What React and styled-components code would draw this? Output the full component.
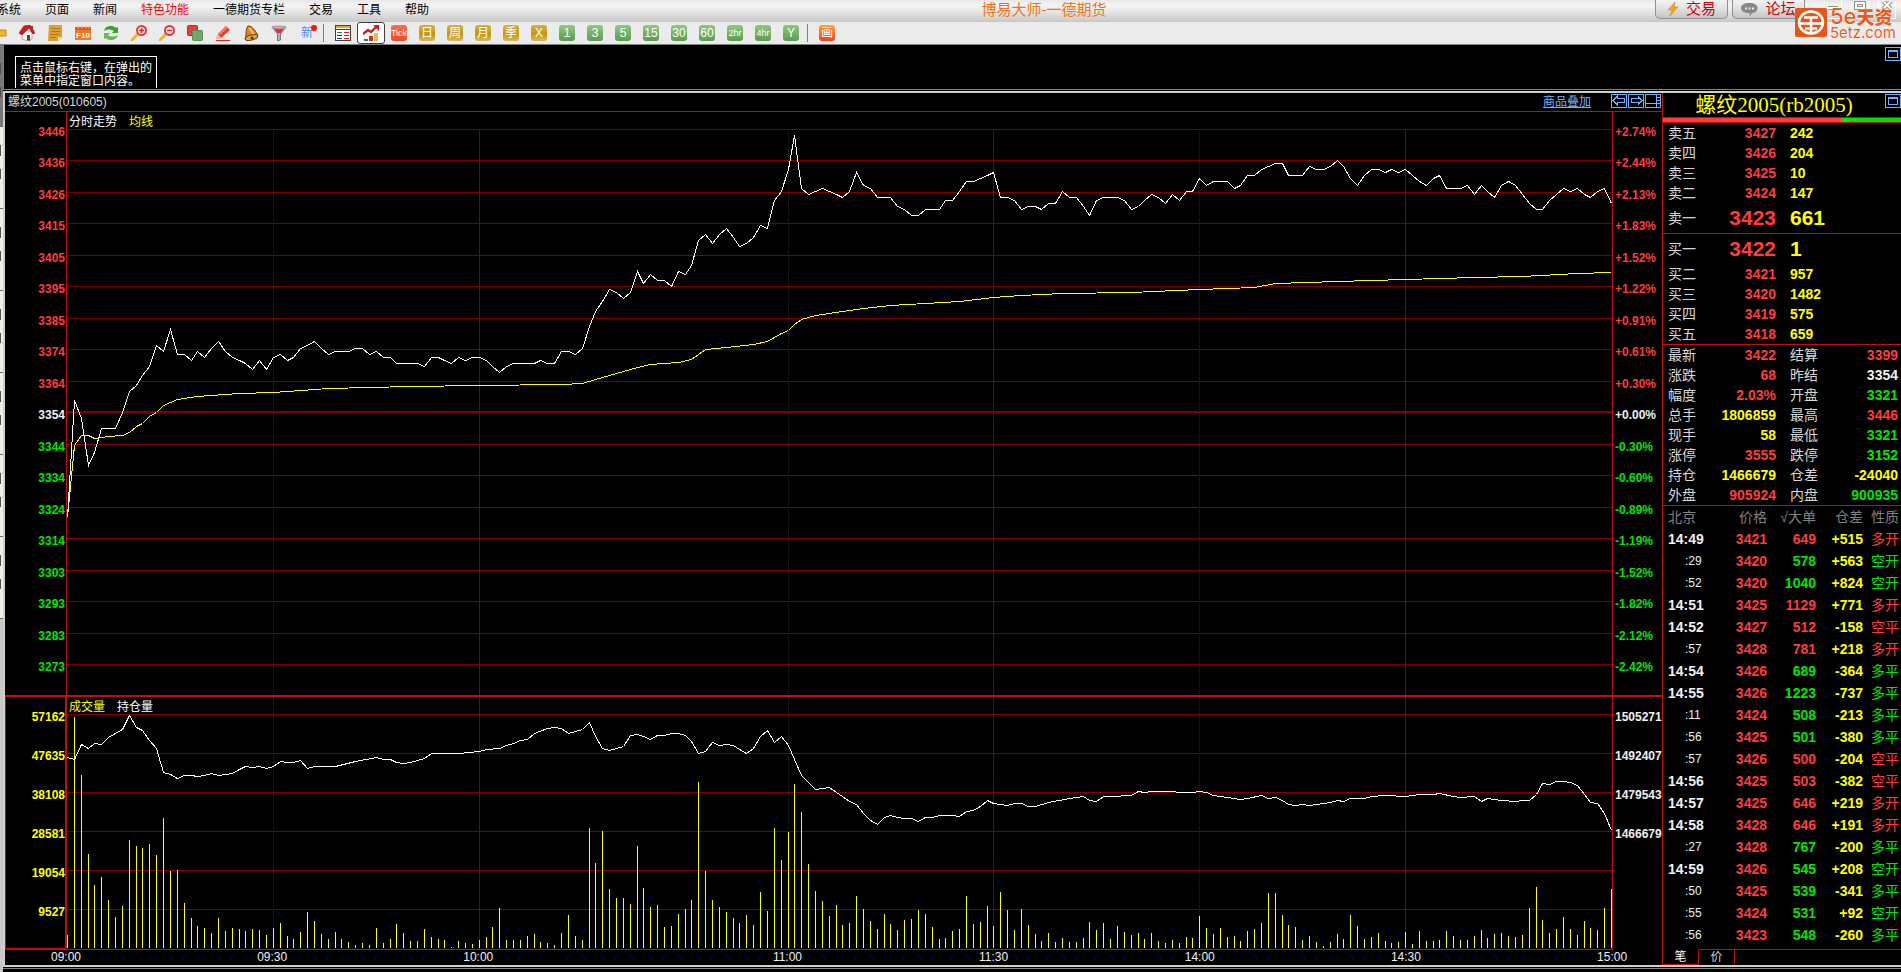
import React from "react"
import styled, { createGlobalStyle, css } from "styled-components"

const colors = {
  red: "#ff3c3c",
  green: "#00e600",
  yellow: "#ffff00",
  white: "#f0f0f0",
  label: "#d8d8d8",
  muted: "#808080",
  line: "#c0100c",
  grid: "#800000",
  link: "#6fb1ff",
  frame: "#d4d0c8",
}

const cjk = `"Liberation Sans", "Noto Sans CJK SC", sans-serif`

/* ---------- market data, one value per traded minute ---------- */

const MINUTES = 225
const MIN_W = 1544 / MINUTES

const prices = [
  3320, 3358, 3352, 3337, 3341, 3349, 3349, 3349, 3354, 3361, 3363, 3366, 3369, 3376, 3374,
  3381, 3373, 3373, 3371, 3374, 3372, 3375, 3377, 3374, 3372, 3371, 3370, 3368, 3371, 3368,
  3372, 3373, 3371, 3372, 3375, 3376, 3377, 3375, 3373, 3374, 3374, 3374, 3375, 3375, 3373,
  3374, 3372, 3372, 3370, 3370, 3370, 3370, 3369, 3372, 3372, 3371, 3370, 3372, 3371, 3372,
  3372, 3371, 3369, 3367, 3369, 3370, 3370, 3370, 3370, 3371, 3370, 3370, 3374, 3374, 3373,
  3375, 3382, 3387, 3390, 3394, 3393, 3391, 3393, 3400, 3396, 3399, 3397, 3397, 3395, 3400,
  3399, 3402, 3410, 3412, 3409, 3412, 3414, 3411, 3408, 3409, 3411, 3415, 3414, 3423, 3426,
  3433, 3444, 3427, 3425, 3426, 3427, 3426, 3425, 3424, 3426, 3432, 3428, 3427, 3424, 3424,
  3424, 3421, 3420, 3418, 3418, 3420, 3420, 3420, 3423, 3423, 3426, 3429, 3429, 3430, 3431,
  3432, 3424, 3424, 3423, 3420, 3421, 3421, 3420, 3422, 3422, 3426, 3424, 3424, 3421, 3418,
  3423, 3424, 3424, 3424, 3423, 3420, 3421, 3423, 3425, 3424, 3422, 3425, 3423, 3426, 3426,
  3430, 3428, 3429, 3429, 3429, 3427, 3428, 3431, 3431, 3433, 3434, 3435, 3435, 3431, 3431,
  3431, 3434, 3433, 3433, 3434, 3436, 3434, 3430, 3428, 3431, 3433, 3433, 3432, 3433, 3432,
  3433, 3431, 3429, 3428, 3430, 3431, 3427, 3427, 3427, 3428, 3425, 3428, 3426, 3424, 3428,
  3429, 3428, 3425, 3422, 3420, 3420, 3423, 3425, 3427, 3426, 3427, 3425, 3424, 3426, 3427,
  3422,
]

// [minute, average price]
const average = [
  [0, 3320], [1, 3343.5], [2, 3346.6], [3, 3346.6], [4, 3345.6], [5, 3345.9], [6, 3346.3],
  [8, 3346.6], [9, 3347.7], [10, 3349.4], [11, 3350.6], [12, 3352.7], [13, 3354.2],
  [14, 3356.4], [16, 3358.3], [19, 3359.3], [25, 3360.3], [30, 3360.7], [38, 3361.9],
  [50, 3362.6], [60, 3362.9], [72, 3363.3], [75, 3363.6], [77, 3364.9], [79, 3366.2],
  [82, 3367.9], [83, 3368.8], [85, 3369.6], [89, 3370.4], [91, 3371.4], [93, 3374.4],
  [96, 3375.2], [100, 3376.3], [102, 3377.2], [104, 3379.6], [105, 3380.7], [106, 3382.7],
  [107, 3384.3], [109, 3385.6], [113, 3386.8], [116, 3387.8], [120, 3388.7], [125, 3389.5],
  [130, 3390], [135, 3391.3], [139, 3392.1], [145, 3392.6], [155, 3393.2], [165, 3394.1],
  [173, 3394.8], [176, 3395.9], [185, 3396.5], [195, 3397.3], [205, 3398], [212, 3398.4],
  [220, 3399.2], [225, 3399.6],
]

// volume bars, in chart units of 244 lots
const volumes = [
  13, 231, 173, 94, 63, 71, 48, 31, 42, 108, 102, 100, 104, 93, 130,
  77, 78, 45, 30, 22, 20, 15, 30, 17, 20, 19, 17, 19, 18, 13,
  20, 25, 12, 9, 16, 36, 27, 14, 9, 16, 9, 6, 3, 5, 3,
  20, 5, 9, 24, 15, 7, 7, 19, 11, 9, 8, 1, 7, 5, 4,
  8, 11, 21, 40, 8, 8, 8, 12, 14, 6, 5, 3, 15, 33, 12,
  8, 120, 85, 117, 59, 50, 50, 44, 102, 60, 41, 43, 21, 22, 34,
  39, 48, 166, 77, 48, 41, 36, 30, 25, 33, 23, 56, 37, 120, 88,
  116, 164, 136, 84, 57, 47, 32, 43, 23, 25, 52, 39, 27, 19, 34,
  24, 18, 28, 29, 38, 34, 21, 9, 10, 17, 19, 52, 24, 26, 42,
  22, 56, 38, 18, 39, 23, 14, 7, 15, 6, 10, 6, 6, 10, 26,
  18, 25, 9, 22, 16, 13, 15, 9, 15, 7, 5, 8, 5, 11, 10,
  32, 20, 14, 20, 11, 12, 7, 17, 19, 25, 55, 55, 33, 23, 21,
  8, 12, 6, 2, 6, 14, 9, 33, 22, 9, 11, 15, 7, 5, 6,
  16, 4, 17, 7, 7, 8, 17, 12, 8, 8, 12, 18, 10, 14, 15,
  12, 11, 13, 40, 61, 28, 15, 19, 31, 19, 13, 27, 20, 18, 40,
  59,
]

// open interest, [minute, chart units above the base line]
const interest = [
  [0, 191], [1, 189], [2, 204], [3, 200], [4, 205], [5, 204], [6, 211], [7, 215], [8, 219],
  [9, 233], [10, 221], [11, 218], [12, 208], [13, 200], [14, 176], [15, 174], [16, 170],
  [17, 173], [18, 173], [19, 172], [20, 173], [21, 175], [22, 173], [23, 174], [24, 175],
  [25, 179], [26, 182], [27, 181], [28, 182], [29, 180], [30, 182], [31, 187], [32, 186],
  [33, 186], [34, 188], [35, 180], [36, 182], [39, 182], [42, 187], [45, 191], [46, 189],
  [47, 189], [48, 186], [49, 185], [50, 186], [52, 190], [53, 195], [57, 195], [60, 197],
  [61, 199], [63, 200], [64, 203], [65, 205], [66, 208], [67, 209], [68, 215], [70, 220],
  [71, 221], [72, 220], [73, 215], [74, 217], [75, 219], [76, 226], [77, 212], [78, 200],
  [79, 198], [80, 200], [81, 202], [82, 213], [83, 214], [84, 212], [85, 209], [86, 213],
  [87, 213], [88, 215], [89, 215], [90, 213], [91, 207], [92, 195], [93, 197], [94, 206],
  [95, 203], [96, 204], [97, 203], [98, 199], [99, 195], [100, 200], [101, 212], [102, 218],
  [103, 206], [104, 212], [105, 203], [106, 189], [107, 173], [108, 166], [109, 159],
  [110, 160], [111, 161], [112, 156], [113, 152], [114, 147], [115, 144], [116, 135],
  [117, 128], [118, 124], [119, 131], [120, 133], [121, 131], [122, 130], [123, 130],
  [124, 127], [125, 131], [126, 131], [127, 133], [129, 133], [130, 132], [131, 137],
  [132, 138], [133, 142], [134, 148], [135, 145], [137, 143], [138, 145], [139, 145],
  [140, 142], [141, 142], [143, 146], [146, 150], [148, 152], [149, 148], [150, 147],
  [151, 152], [153, 152], [154, 153], [155, 153], [156, 157], [157, 156], [158, 157],
  [161, 157], [162, 156], [164, 156], [165, 157], [166, 156], [167, 153], [169, 151],
  [171, 149], [172, 150], [174, 153], [175, 150], [176, 151], [177, 148], [178, 144],
  [179, 143], [180, 144], [181, 143], [184, 146], [185, 148], [186, 147], [187, 150],
  [189, 150], [190, 152], [192, 153], [195, 152], [197, 154], [199, 154], [200, 155],
  [202, 152], [203, 151], [205, 152], [206, 147], [207, 150], [208, 149], [209, 148],
  [211, 147], [212, 148], [213, 148], [214, 154], [215, 165], [216, 164], [217, 167],
  [218, 167], [219, 166], [220, 163], [221, 154], [222, 146], [223, 145], [224, 135],
  [225, 118],
]

const priceTicks = [
  ["3446", "+2.74%"], ["3436", "+2.44%"], ["3426", "+2.13%"], ["3415", "+1.83%"],
  ["3405", "+1.52%"], ["3395", "+1.22%"], ["3385", "+0.91%"], ["3374", "+0.61%"],
  ["3364", "+0.30%"], ["3354", "+0.00%"], ["3344", "-0.30%"], ["3334", "-0.60%"],
  ["3324", "-0.89%"], ["3314", "-1.19%"], ["3303", "-1.52%"], ["3293", "-1.82%"],
  ["3283", "-2.12%"], ["3273", "-2.42%"],
]

const volumeTicks = ["57162", "47635", "38108", "28581", "19054", "9527"]
const interestTicks = ["1505271", "1492407", "1479543", "1466679"]

// time label, minutes until the next one
const timeTicks = [
  ["09:00", 30], ["09:30", 30], ["10:00", 45], ["11:00", 30],
  ["11:30", 30], ["14:00", 30], ["14:30", 30], ["15:00", 0],
]

const solidMinutes = [60, 135, 195]
const dottedMinutes = [30, 105, 165]

const asks = [
  ["卖五", "3427", "242"], ["卖四", "3426", "204"], ["卖三", "3425", "10"],
  ["卖二", "3424", "147"], ["卖一", "3423", "661"],
]
const bids = [
  ["买一", "3422", "1"], ["买二", "3421", "957"], ["买三", "3420", "1482"],
  ["买四", "3419", "575"], ["买五", "3418", "659"],
]

const stats = [
  ["最新", "3422", "red", "结算", "3399", "red"],
  ["涨跌", "68", "red", "昨结", "3354", "white"],
  ["幅度", "2.03%", "red", "开盘", "3321", "green"],
  ["总手", "1806859", "yellow", "最高", "3446", "red"],
  ["现手", "58", "yellow", "最低", "3321", "green"],
  ["涨停", "3555", "red", "跌停", "3152", "green"],
  ["持仓", "1466679", "yellow", "仓差", "-24040", "yellow"],
  ["外盘", "905924", "red", "内盘", "900935", "green"],
]

const trades = [
  ["14:49", "3421", "649", "+515", "多开", "red"],
  [":29", "3420", "578", "+563", "空开", "green"],
  [":52", "3420", "1040", "+824", "空开", "green"],
  ["14:51", "3425", "1129", "+771", "多开", "red"],
  ["14:52", "3427", "512", "-158", "空平", "red"],
  [":57", "3428", "781", "+218", "多开", "red"],
  ["14:54", "3426", "689", "-364", "多平", "green"],
  ["14:55", "3426", "1223", "-737", "多平", "green"],
  [":11", "3424", "508", "-213", "多平", "green"],
  [":56", "3425", "501", "-380", "多平", "green"],
  [":57", "3426", "500", "-204", "空平", "red"],
  ["14:56", "3425", "503", "-382", "空平", "red"],
  ["14:57", "3425", "646", "+219", "多开", "red"],
  ["14:58", "3428", "646", "+191", "多开", "red"],
  [":27", "3428", "767", "-200", "多平", "green"],
  ["14:59", "3426", "545", "+208", "空开", "green"],
  [":50", "3425", "539", "-341", "多平", "green"],
  [":55", "3424", "531", "+92", "空开", "green"],
  [":56", "3423", "548", "-260", "多平", "green"],
]

/* ---------- shell ---------- */

const GlobalStyle = createGlobalStyle`
  * { box-sizing: border-box; }
  body {
    margin: 0;
    background: #000;
    font-family: ${cjk};
    font-size: 12px;
  }
  button {
    margin: 0;
    padding: 0;
    border: 0;
    background: none;
    font: inherit;
    color: inherit;
    cursor: pointer;
  }
`

const Shell = styled.div`
  position: relative;
  display: flex;
  flex-direction: column;
  height: 100vh;
  min-height: 900px;
  min-width: 1200px;
  overflow: hidden;
`

const MenuBar = styled.header`
  display: flex;
  flex: 0 0 22px;
  background: linear-gradient(#e8e8e8, #f4f4f4 25%, #e4e4e4 55%, #c8c8c8);
  color: #000;
`

const Menu = styled.nav`
  display: flex;
  gap: 24px;
  margin-left: -3px;
`

const MenuItem = styled.button`
  height: 20px;
  line-height: 20px;
  white-space: nowrap;
  color: ${props => (props.$hot ? "#ff0000" : "#000")};
`

const AppTitle = styled.div`
  flex: 1;
  padding-left: 4px;
  text-align: center;
  font-size: 15px;
  line-height: 20px;
  color: #ec7420;
`

const HeaderActions = styled.div`
  display: flex;
  gap: 4px;
  width: 246px;
`

const HeaderButton = styled.button`
  display: flex;
  align-items: center;
  justify-content: center;
  gap: 7px;
  width: 73px;
  height: 19px;
  border: 1px solid #909090;
  border-top: 0;
  border-radius: 0 0 5px 5px;
  background: linear-gradient(#f4f4f4, #e0e0e0 50%, #c4c4c4);
  color: #d0000c;
  font-size: 15px;
  line-height: 18px;
  white-space: nowrap;
`

const WindowButtons = styled.div`
  display: flex;
  justify-content: space-around;
  flex: 1;
  padding-left: 10px;
`

const Brand = styled.a`
  position: absolute;
  top: 8px;
  right: 5px;
  display: flex;
  gap: 3px;
  color: #e85c1c;
  text-decoration: none;
`

const BrandText = styled.span`
  display: flex;
  flex-direction: column;
  font-family: Inter, "Noto Sans CJK SC", sans-serif;
  white-space: nowrap;
  text-shadow: 0 0 1px #fff, 0 0 1px #fff;

  strong {
    font-size: 18px;
    line-height: 17px;
    font-weight: 900;
  }
  strong span {
    font-size: 22px;
    font-weight: 500;
  }
  small {
    font-size: 15px;
    line-height: 14px;
  }
`

const ToolBar = styled.div`
  display: flex;
  flex: 0 0 23px;
  border-bottom: 1px solid #808080;
  background: #ebebeb;
`

const Tools = styled.div`
  display: flex;
  margin-left: -15px;
`

const Tool = styled.button`
  display: flex;
  align-items: center;
  justify-content: center;
  width: 28px;
  height: 22px;

  ${props =>
    props.$active &&
    css`
      border: 1px solid #404040;
      border-radius: 3px;
      background: #fff;
    `}
`

const Separator = styled.div`
  width: 8px;
  padding: 2px 5px 2px 2px;

  &::before {
    content: "";
    display: block;
    height: 18px;
    width: 1px;
    background: #808080;
  }
`

const badgeFill = {
  gold: "linear-gradient(#cfb050, #c8960c 55%, #d8b860)",
  green: "linear-gradient(#90c880, #5c9c50)",
  orange: "linear-gradient(#f87048, #f04828)",
  paint: "linear-gradient(#ffa040, #f04020)",
}

const Badge = styled.span`
  display: flex;
  align-items: center;
  justify-content: center;
  width: 16px;
  height: 16px;
  border-radius: 3px;
  background: ${props => badgeFill[props.$tone]};
  color: #fff;
  font-size: ${props => (props.$small ? 9 : 12)}px;
  line-height: 16px;
`

const Main = styled.div`
  display: flex;
  flex: 1;
  min-height: 0;
`

const PageTabs = styled.div`
  flex: 0 0 3px;
  background: #c8c8c8;
`

const PageTab = styled.div`
  height: 82px;
  border-bottom: 1px solid #707070;
  background: ${props => (props.$active ? "#787878" : "#f0efe6")};

  &::before {
    content: "";
    display: block;
    width: 1px;
    height: 100%;
    background: linear-gradient(transparent 22%, #505050 22% 36%, transparent 36% 52%, #505050 52% 64%, transparent 64%);
  }
`

const Workspace = styled.div`
  display: flex;
  flex-direction: column;
  flex: 1;
  min-width: 0;
`

const NoticePane = styled.section`
  display: flex;
  justify-content: space-between;
  flex: 0 0 45px;
  padding-left: 11px;
  border-left: 1px solid #808080;
  border-bottom: 1px solid #808080;
  background: #000;
  overflow: hidden;
`

const Notice = styled.p`
  width: 142px;
  height: 32px;
  margin: 11px 0 0;
  padding: 5px 4px 0;
  border: 1px solid #fff;
  border-bottom: 0;
  color: #fff;
  line-height: 13px;
`

const PaneButton = styled.button`
  display: block;
  height: 14px;
  margin-top: ${props => props.$top || 0}px;
`

const Body = styled.div`
  display: flex;
  flex: 1;
  min-height: 0;
  margin-top: 1px;
  border: solid ${colors.frame};
  border-width: 2px 0 2px 2px;
`

const FootStrip = styled.div`
  flex: 0 0 5px;
  padding-top: 1px;

  &::before {
    content: "";
    display: block;
    border-top: 1px solid #808080;
  }
`

/* ---------- chart ---------- */

const ChartPane = styled.section`
  display: flex;
  flex-direction: column;
  flex: 1;
  min-width: 0;
`

const ChartHead = styled.div`
  display: flex;
  align-items: flex-start;
  flex: 0 0 19px;
  padding: 1px 1px 0 3px;
  border-bottom: 1px solid ${colors.line};
  line-height: 17px;
  color: ${colors.label};

  a {
    margin-left: auto;
    margin-right: 20px;
    color: ${colors.link};
  }
`

const ChartButtons = styled.div`
  display: flex;
  gap: 1px;
`

const axisGrid = css`
  display: grid;
  grid-template-columns: 61px 1fr 49px;
`

const PriceChart = styled.div`
  ${axisGrid}
  flex: 583 1 0;
  min-height: 0;
`

// the 2px basis is the divider itself, so only the plots share the free height
const VolumeChart = styled.div`
  ${axisGrid}
  flex: 253 1 2px;
  min-height: 0;
  border-top: 2px solid ${colors.line};
`

const Axis = styled.ul`
  display: grid;
  grid-template-rows: repeat(${props => props.$rows}, 1fr);
  align-items: center;
  margin: 0;
  padding: ${props => (props.$rows > 6 ? "4px 0 12px" : "0 0 19px")};
  list-style: none;
  font-weight: bold;
  line-height: 14px;
  text-align: ${props => (props.$left ? "right" : "left")};
  ${props => (props.$left ? "padding-right: 1px;" : "padding-left: 2px;")}
  ${props =>
    props.$framed &&
    css`
      border: solid ${colors.line};
      border-width: 0 1px 2px 1px;
      padding-right: 0;
      padding-bottom: 17px;
    `}
`

const AxisLabel = styled.li`
  color: ${props => colors[props.$tone]};
`

const Plot = styled.div`
  position: relative;
  min-width: 0;
  min-height: 0;
  border: solid ${colors.line};
  border-width: 0 1px ${props => (props.$base ? 1 : 0)}px 1px;

  svg {
    display: block;
    position: absolute;
    inset: 0;
    width: 100%;
    height: 100%;
  }
`

const Legend = styled.div`
  position: absolute;
  top: 2px;
  left: 2px;
  display: flex;
  gap: 12px;
  line-height: 16px;
  color: #fff;

  em {
    font-style: normal;
    color: ${colors.yellow};
  }
`

const TimeAxis = styled.div`
  display: flex;
  flex: 0 0 15px;
  padding: 0 50px 0 61px;
  line-height: 15px;
  color: ${colors.white};
`

const TimeSlot = styled.div`
  flex: ${props => props.$span} 0 0;
  min-width: 0;

  time {
    display: block;
    width: 32px;
    margin-left: -16px;
    text-align: center;
  }
`

/* ---------- quote panel ---------- */

const QuotePane = styled.aside`
  display: flex;
  flex-direction: column;
  flex: 0 0 239px;
  border-left: 1px solid ${colors.line};
`

const QuoteHead = styled.div`
  display: flex;
  flex: 0 0 25px;
  border-bottom: 1px solid ${colors.line};

  h1 {
    flex: 1;
    margin: 0;
    font: normal 21px/24px "Liberation Serif", "Noto Sans CJK SC", serif;
    text-align: center;
    color: ${colors.yellow};
  }
`

const Balance = styled.div`
  flex: 0 0 5px;
  border-bottom: 1px solid ${colors.line};
  background: linear-gradient(90deg, ${colors.red} 75%, ${colors.green} 75%);
`

const Table = styled.table`
  width: 100%;
  table-layout: fixed;
  border-collapse: collapse;
  border-bottom: ${props => (props.$ruled ? `1px solid ${colors.line}` : "0")};
  font-size: 14px;

  th,
  td {
    padding: 0;
    white-space: nowrap;
  }
  th {
    font-weight: normal;
    text-align: left;
    color: ${colors.label};
  }
`

const Row = styled.tr`
  height: ${props => props.$height || 20}px;
  line-height: ${props => props.$height || 20}px;

  td {
    font-size: ${props => (props.$big ? 21 : 14)}px;
  }
`

const Name = styled.th`
  && {
    padding-left: ${props => (props.$second ? 14 : 5)}px;
  }
`

const Value = styled.td`
  color: ${props => colors[props.$tone]};
  font-weight: bold;
  text-align: right;
`

const Lots = styled(Value)`
  && {
    padding-left: 14px;
    text-align: left;
  }
`

const EndValue = styled(Value)`
  && {
    padding-right: 3px;
  }
`

const TradeHead = styled.th`
  && {
    color: ${colors.muted};
    text-align: ${props => (props.$start ? "left" : "right")};
    padding-left: ${props => (props.$start ? 5 : 0)}px;
    padding-right: ${props => (props.$end ? 2 : 0)}px;
  }
`

const TradeTime = styled.td`
  && {
    padding-left: ${props => (props.$seconds ? 22 : 5)}px;
    font-size: ${props => (props.$seconds ? 12 : 14)}px;
    font-weight: ${props => (props.$seconds ? "normal" : "bold")};
    color: ${colors.white};
  }
`

const Kind = styled.td`
  && {
    padding-right: 2px;
    text-align: right;
    color: ${props => colors[props.$tone]};
  }
`

const QuoteTabs = styled.div`
  display: flex;
  flex: 0 0 16px;
  margin-top: auto;
  color: ${colors.label};
`

const QuoteTab = styled.button`
  width: 36px;
  line-height: 14px;
  border-right: 1px solid ${colors.line};
  border-top: 1px solid ${props => (props.$active ? "transparent" : colors.line)};
  border-bottom: 1px solid ${props => (props.$active ? colors.line : "transparent")};
  color: ${props => (props.$active ? "#fff" : colors.label)};
`

const TabRest = styled.div`
  flex: 1;
  border-top: 1px solid ${colors.line};
`

/* ---------- icons ---------- */

const Icon = ({ children }) => (
  <svg width="16" height="16" viewBox="0 0 16 16" aria-hidden="true">
    {children}
  </svg>
)

const BackIcon = () => (
  <Icon>
    <path d="M1 8l7-7v4h7v6H8v4z" fill="#f0b828" stroke="#c08810" />
  </Icon>
)

const HomeIcon = () => (
  <Icon>
    <path d="M3 7l4-2 6 2v7l-4 2-6-2z" fill="#f4f0ee" stroke="#8c8078" strokeWidth=".6" />
    <path d="M0 8l5-7 6-1 5 8-2 1-4-6-7 7z" fill="#c82020" stroke="#801010" strokeWidth=".6" />
    <path d="M8 10h3v6l-3-1z" fill="#703820" />
    <path d="M12 1h2v4l-2-2z" fill="#a03020" />
  </Icon>
)

const NoteIcon = () => (
  <Icon>
    <path d="M2 0h13v12l-4 4H1z" fill="#dca030" />
    <path d="M4 3.500h9M4 6.500h9M3 9.500h9M3 12.500h6" stroke="#b07818" />
    <path d="M15 12h-4v4z" fill="#f4d890" />
  </Icon>
)

const CalendarIcon = () => (
  <svg width="18" height="16" viewBox="0 0 18 16" aria-hidden="true">
    <path d="M1 2h16v13H1z" fill="#f07820" />
    <path d="M1 2h16v3H1z" fill="#e84828" />
    <path d="M4 0v4M8 0v4M12 0v4M15 0v4" stroke="#f8c060" />
    <text x="9" y="13" fontSize="8" fontWeight="bold" textAnchor="middle" fill="#fff">F10</text>
  </svg>
)

const RefreshIcon = () => (
  <Icon>
    <path d="M1 6c1-4 4-5 7-5 3 0 4 1 5 2l2-1v6H9l2-2C8 4 4 4 1 6z" fill="#38a030" />
    <path d="M15 10c-1 4-4 5-7 5-3 0-4-1-5-2l-2 1V8h6l-2 2c3 2 7 2 10 0z" fill="#68b850" />
  </Icon>
)

const ZoomIcon = ({ plus }) => (
  <Icon>
    <path d="M1 15l6-6" stroke="#f0b030" strokeWidth="3" strokeLinecap="round" />
    <circle cx="10.500" cy="5.500" r="4.500" fill="#fbe8e8" stroke="#e03838" strokeWidth="2" />
    <path d={plus ? "M8 5.500h5M10.500 3v5" : "M8 5.500h5"} stroke="#d02828" strokeWidth="1.500" />
  </Icon>
)

const SquaresIcon = () => (
  <Icon>
    <rect x=".5" y=".5" width="10" height="10" rx="1" fill="#e04038" stroke="#b83030" />
    <rect x="5.500" y="5.500" width="10" height="10" rx="1" fill="#70a868" stroke="#5c9058" />
  </Icon>
)

const PencilIcon = () => (
  <Icon>
    <path d="M1 14l2-5 8-8 4 4-9 8z" fill="#e84028" />
    <path d="M4 9l8-8 1 1-8 8z" fill="#f89070" />
    <path d="M1 14l2-5 3 4z" fill="#f0c890" />
    <path d="M1 15.500h14" stroke="#e02020" />
  </Icon>
)

const BellIcon = () => (
  <Icon>
    <path d="M5 1c5 0 6 4 10 9L2 14c2-5 0-9 3-13z" fill="#d88820" stroke="#704010" />
    <path d="M6 3c2 1 3 4 5 7" stroke="#f8d070" strokeWidth="1.500" fill="none" />
    <ellipse cx="8.500" cy="12.500" rx="6.500" ry="2.500" transform="rotate(-15 8.500 12.500)" fill="#e8a840" stroke="#704010" />
    <circle cx="9" cy="13" r="1.500" fill="#502808" />
  </Icon>
)

const FunnelIcon = () => (
  <Icon>
    <path d="M1 2h14l-5.500 7v6l-3 1V9z" fill="#b0b0b0" stroke="#606060" strokeWidth=".8" />
    <path d="M3 3h10L9.500 8h-3z" fill="#e82838" />
    <ellipse cx="8" cy="2.500" rx="7" ry="1.500" fill="#e8a0a0" stroke="#888" strokeWidth=".6" />
  </Icon>
)

const SheetIcon = () => (
  <Icon>
    <rect x=".5" y=".5" width="15" height="15" fill="#fff" stroke="#404040" />
    <path d="M1 2h14" stroke="#e0a830" strokeWidth="2" />
    <path d="M1 4.500h14" stroke="#404040" />
    <path d="M2 7.500h5" stroke="#208040" />
    <path d="M9 7.500h5" stroke="#d02020" />
    <path d="M2 10.500h5M2 13.500h5" stroke="#303090" />
    <path d="M9 10.500h5M9 13.500h5" stroke="#d02020" />
  </Icon>
)

const TrendIcon = () => (
  <Icon>
    <path d="M0 9l5-4 3 2 5-5" fill="none" stroke="#d81818" strokeWidth="2.400" />
    <path d="M10 0h6v6z" fill="#d81818" />
    <path d="M1 14h4v2H1z" fill="#308030" />
    <path d="M6 11h4v5H6z" fill="#c83020" />
    <path d="M11 8h4v8h-4z" fill="#e0b868" />
  </Icon>
)

const NewMark = styled.span`
  position: relative;
  font-size: 12px;
  line-height: 20px;
  color: #4890e8;

  &::after {
    content: "";
    position: absolute;
    top: 2px;
    right: -4px;
    width: 6px;
    height: 6px;
    border-radius: 50%;
    background: #ff1010;
  }
`

const frameIcons = {
  pane: "M3.500 3.500h9v7h-9zM3 4.500h10",
  left: "M2 6.500l4-4v2h7v4H6v2z",
  right: "M14 6.500l-4-4v2H3v4h7v2z",
  split: "M0 9.500h11M11.500 0v14M12 3.500h4M12 6.500h4M12 9.500h4",
}

const FrameIcon = ({ name }) => (
  <svg width="16" height="14" viewBox="0 0 16 14" fill="none" stroke={colors.link} shapeRendering="crispEdges" aria-hidden="true">
    <rect x=".5" y=".5" width="15" height="13" />
    <path d={frameIcons[name]} />
  </svg>
)

const BoltIcon = () => (
  <svg width="12" height="14" viewBox="0 0 12 14" aria-hidden="true">
    <path d="M8 0L1 8h4l-2 6 8-9H7z" fill="#f8a020" stroke="#e07808" strokeWidth=".5" />
  </svg>
)

const ChatIcon = () => (
  <svg width="17" height="13" viewBox="0 0 17 13" aria-hidden="true">
    <path d="M8.500 0c5 0 8 2 8 5s-2 4.500-5 5l-3 3V10C3 10 0 8 0 5s3-5 8.500-5z" fill="#888" />
    <path d="M4 4.500h2v2H4zM7.500 4.500h2v2h-2zM11 4.500h2v2h-2z" fill="#e8e8e8" />
  </svg>
)

const WindowIcon = ({ d }) => (
  <svg width="18" height="18" viewBox="0 0 18 18" fill="none" aria-hidden="true">
    <path d="M.5 0v17.500h17V0" stroke="#fff" />
    <path d={d} stroke="#909090" strokeWidth="4" />
    <path d={d} stroke="#fff" strokeWidth="2" />
  </svg>
)

const BrandIcon = () => (
  <svg width="32" height="29" viewBox="0 0 32 29" aria-hidden="true">
    <rect width="32" height="29" rx="2" fill="#e4571c" />
    <ellipse cx="16" cy="14.500" rx="12" ry="11" fill="none" stroke="#fff" strokeWidth="2.500" />
    <path d="M9 9.500h14M5 15.500h22M16 9.500v15M10 20.500h12" stroke="#fff" strokeWidth="2.500" />
  </svg>
)

/* ---------- pieces ---------- */

const minuteX = i => Math.round(i * MIN_W) + 0.5
const priceY = p => Math.round(300.2 - (p - 3354) * 3.077) + 0.5
const unitY = h => 251.5 - h

const toPoints = list => list.map(([x, y]) => `${x},${y}`).join(" ")

const pricePoints = toPoints(prices.map((p, i) => [minuteX(i), priceY(p)]))
const averagePoints = toPoints(average.map(([i, p]) => [minuteX(i), priceY(p)]))
const interestPoints = toPoints(interest.map(([i, h]) => [minuteX(i), unitY(h)]))
const volumePath = volumes.map((h, i) => `M${minuteX(i)} 251V${251 - h}`).join("")

const rowsPath = (count, step) =>
  Array.from({ length: count }, (_, k) => `M0 ${Math.floor(17 + k * step) + 0.5}H1545`).join("")

const columnsPath = (minutes, top, height) =>
  minutes.map(m => `M${minuteX(m)} ${top}V${height}`).join("")

const Grid = ({ rows, step, top, height }) => (
  <g stroke={colors.grid}>
    <path d={rowsPath(rows, step)} />
    <path d={columnsPath(solidMinutes, top, height)} />
    <path d={columnsPath(dottedMinutes, top, height)} strokeDasharray="1 1" />
  </g>
)

const priceTone = i => (i < 9 ? "red" : i === 9 ? "white" : "green")

const DepthTable = ({ rows, best }) => (
  <Table $ruled>
    <colgroup>
      <col width="42" />
      <col width="71" />
      <col />
    </colgroup>
    <tbody>
      {rows.map(([name, price, lots]) => (
        <Row key={name} $big={name === best} $height={name === best ? 30 : 20}>
          <Name scope="row">{name}</Name>
          <Value $tone="red">{price}</Value>
          <Lots $tone="yellow">{lots}</Lots>
        </Row>
      ))}
    </tbody>
  </Table>
)

const StatsTable = () => (
  <Table $ruled>
    <colgroup>
      <col width="42" />
      <col width="71" />
      <col width="46" />
      <col />
    </colgroup>
    <tbody>
      {stats.map(([a, av, at, b, bv, bt]) => (
        <Row key={a}>
          <Name scope="row">{a}</Name>
          <Value $tone={at}>{av}</Value>
          <Name scope="row" $second>{b}</Name>
          <EndValue $tone={bt}>{bv}</EndValue>
        </Row>
      ))}
    </tbody>
  </Table>
)

const TradeTable = () => (
  <Table>
    <colgroup>
      <col width="52" />
      <col width="52" />
      <col width="49" />
      <col width="47" />
      <col />
    </colgroup>
    <thead>
      <Row $height={22}>
        <TradeHead $start>北京</TradeHead>
        <TradeHead>价格</TradeHead>
        <TradeHead>√大单</TradeHead>
        <TradeHead>仓差</TradeHead>
        <TradeHead $end>性质</TradeHead>
      </Row>
    </thead>
    <tbody>
      {trades.map(([time, price, lots, delta, kind, tone], i) => (
        <Row key={i} $height={22}>
          <TradeTime $seconds={time.startsWith(":")}>{time}</TradeTime>
          <Value $tone="red">{price}</Value>
          <Value $tone={tone}>{lots}</Value>
          <Value $tone="yellow">{delta}</Value>
          <Kind $tone={tone}>{kind}</Kind>
        </Row>
      ))}
    </tbody>
  </Table>
)

const menuItems = ["系统", "页面", "新闻", "特色功能", "一德期货专栏", "交易", "工具", "帮助"]

const iconTools = [
  ["后退", <BackIcon />],
  ["首页", <HomeIcon />],
  ["公告", <NoteIcon />],
  ["资料", <CalendarIcon />],
  ["刷新", <RefreshIcon />],
  ["放大", <ZoomIcon plus />],
  ["缩小", <ZoomIcon />],
  ["叠加", <SquaresIcon />],
  ["画笔", <PencilIcon />],
  ["预警", <BellIcon />],
  ["筛选", <FunnelIcon />],
  ["新功能", <NewMark>新</NewMark>],
]

const periods = [
  ["Tick", "orange"], ["日", "gold"], ["周", "gold"], ["月", "gold"], ["季", "gold"],
  ["X", "gold"], ["1", "green"], ["3", "green"], ["5", "green"], ["15", "green"],
  ["30", "green"], ["60", "green"], ["2hr", "green"], ["4hr", "green"], ["Y", "green"],
]

export default function App() {
  return (
    <Shell>
      <GlobalStyle />
      <MenuBar>
        <Menu>
          {menuItems.map(item => (
            <MenuItem key={item} $hot={item === "特色功能"}>{item}</MenuItem>
          ))}
        </Menu>
        <AppTitle>博易大师-一德期货</AppTitle>
        <HeaderActions>
          <HeaderButton><BoltIcon />交易</HeaderButton>
          <HeaderButton><ChatIcon />论坛</HeaderButton>
          <WindowButtons>
            <button aria-label="最小化"><WindowIcon d="M4 7h10" /></button>
            <button aria-label="还原"><WindowIcon d="M5 2h8v5H5z" /></button>
            <button aria-label="关闭"><WindowIcon d="M5 0l8 8M13 0L5 8" /></button>
          </WindowButtons>
        </HeaderActions>
      </MenuBar>
      <ToolBar>
        <Tools>
          {iconTools.map(([name, icon]) => (
            <Tool key={name} aria-label={name}>{icon}</Tool>
          ))}
          <Separator />
          <Tool aria-label="报价"><SheetIcon /></Tool>
          <Tool aria-label="分时" $active><TrendIcon /></Tool>
          {periods.map(([name, tone]) => (
            <Tool key={name}>
              <Badge $tone={tone} $small={name.length > 2}>{name}</Badge>
            </Tool>
          ))}
          <Separator />
          <Tool><Badge $tone="paint">画</Badge></Tool>
        </Tools>
      </ToolBar>
      <Brand href="#">
        <BrandIcon />
        <BrandText>
          <strong><span>5e</span>天资</strong>
          <small>5etz.com</small>
        </BrandText>
      </Brand>

      <Main>
        <PageTabs>
          {[0, 1, 2, 3, 4, 5, 6].map(i => (
            <PageTab key={i} $active={i === 0} />
          ))}
        </PageTabs>
        <Workspace>
          <NoticePane>
            <Notice>点击鼠标右键，在弹出的菜单中指定窗口内容。</Notice>
            <PaneButton $top={2} aria-label="最大化"><FrameIcon name="pane" /></PaneButton>
          </NoticePane>

          <Body>
            <ChartPane>
              <ChartHead>
                <span>螺纹2005(010605)</span>
                <a href="#">商品叠加</a>
                <ChartButtons>
                  <PaneButton aria-label="上一个"><FrameIcon name="left" /></PaneButton>
                  <PaneButton aria-label="下一个"><FrameIcon name="right" /></PaneButton>
                  <PaneButton aria-label="分栏"><FrameIcon name="split" /></PaneButton>
                </ChartButtons>
              </ChartHead>

              <PriceChart>
                <Axis $left $rows={18}>
                  {priceTicks.map(([price], i) => (
                    <AxisLabel key={price} $tone={priceTone(i)}>{price}</AxisLabel>
                  ))}
                </Axis>
                <Plot>
                  <svg viewBox="0 0 1545 583" preserveAspectRatio="none" fill="none" shapeRendering="crispEdges">
                    <Grid rows={18} step={31.5} top={17} height={583} />
                    <path d="M0 300H1545" stroke={colors.grid} strokeWidth="2" />
                    <polyline points={averagePoints} stroke={colors.yellow} />
                    <polyline points={pricePoints} stroke="#fff" />
                  </svg>
                  <Legend>
                    <span>分时走势</span>
                    <em>均线</em>
                  </Legend>
                </Plot>
                <Axis $rows={18}>
                  {priceTicks.map(([price, change], i) => (
                    <AxisLabel key={price} $tone={priceTone(i)}>{change}</AxisLabel>
                  ))}
                </Axis>
              </PriceChart>

              <VolumeChart>
                <Axis $left $framed $rows={6}>
                  {volumeTicks.map(v => (
                    <AxisLabel key={v} $tone="yellow">{v}</AxisLabel>
                  ))}
                </Axis>
                <Plot $base>
                  <svg viewBox="0 0 1545 252" preserveAspectRatio="none" fill="none" shapeRendering="crispEdges">
                    <Grid rows={6} step={39} top={0} height={252} />
                    <path d={volumePath} stroke={colors.yellow} />
                    <polyline points={interestPoints} stroke="#fff" />
                  </svg>
                  <Legend>
                    <em>成交量</em>
                    <span>持仓量</span>
                  </Legend>
                </Plot>
                <Axis $rows={6}>
                  {interestTicks.map(v => (
                    <AxisLabel key={v} $tone="white">{v}</AxisLabel>
                  ))}
                </Axis>
              </VolumeChart>

              <TimeAxis>
                {timeTicks.map(([label, span]) => (
                  <TimeSlot key={label} $span={span}>
                    <time>{label}</time>
                  </TimeSlot>
                ))}
              </TimeAxis>
            </ChartPane>

            <QuotePane>
              <QuoteHead>
                <h1>螺纹2005(rb2005)</h1>
                <PaneButton $top={1} aria-label="最大化"><FrameIcon name="pane" /></PaneButton>
              </QuoteHead>
              <Balance />
              <DepthTable rows={asks} best="卖一" />
              <DepthTable rows={bids} best="买一" />
              <StatsTable />
              <TradeTable />
              <QuoteTabs>
                <QuoteTab $active>笔</QuoteTab>
                <QuoteTab>价</QuoteTab>
                <TabRest />
              </QuoteTabs>
            </QuotePane>
          </Body>
          <FootStrip />
        </Workspace>
      </Main>
    </Shell>
  )
}
